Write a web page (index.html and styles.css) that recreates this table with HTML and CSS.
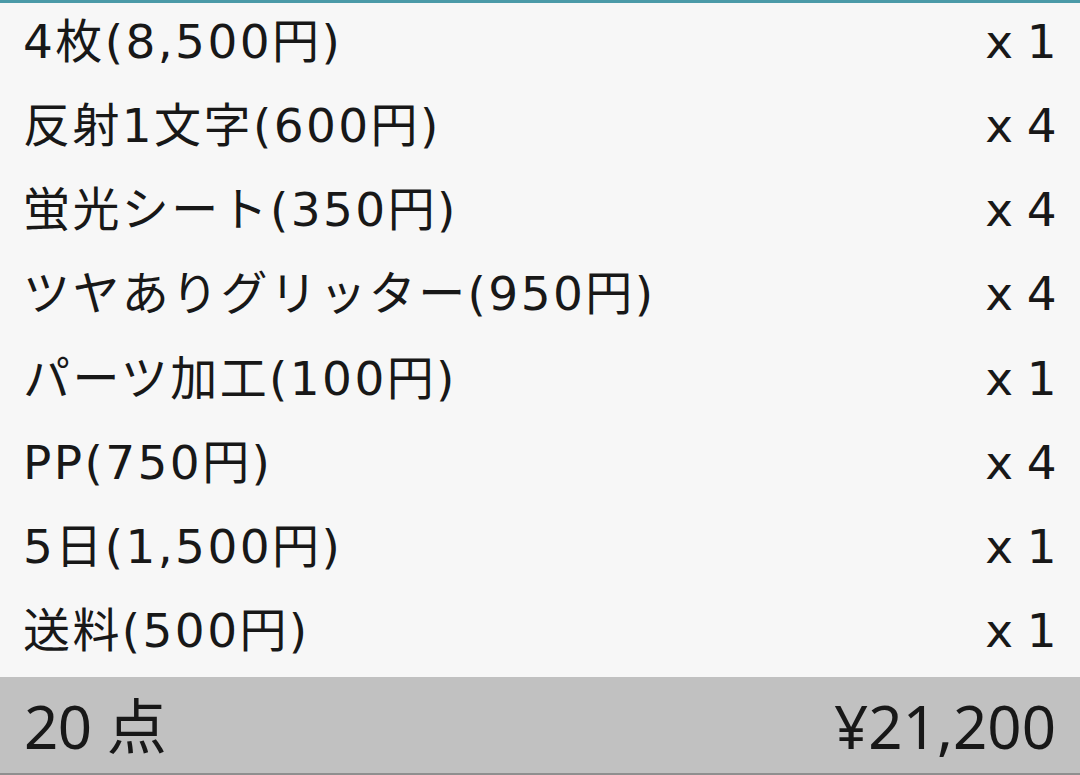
FILE: index.html
```html
<!DOCTYPE html>
<html lang="ja">
<head>
<meta charset="utf-8">
<link rel="stylesheet" href="styles.css">
</head>
<body>
<div class="screen">
  <div class="list">
    <div class="row"><span class="name">4枚(8,500円)</span><span class="qty">x 1</span></div>
    <div class="row"><span class="name">反射1文字(600円)</span><span class="qty">x 4</span></div>
    <div class="row"><span class="name">蛍光シート(350円)</span><span class="qty">x 4</span></div>
    <div class="row"><span class="name">ツヤありグリッター(950円)</span><span class="qty">x 4</span></div>
    <div class="row"><span class="name">パーツ加工(100円)</span><span class="qty">x 1</span></div>
    <div class="row"><span class="name">PP(750円)</span><span class="qty">x 4</span></div>
    <div class="row"><span class="name">5日(1,500円)</span><span class="qty">x 1</span></div>
    <div class="row"><span class="name">送料(500円)</span><span class="qty">x 1</span></div>
  </div>
  <div class="total"><span class="count">20 点</span><span class="sum">¥21,200</span></div>
</div>
</body>
</html>
```
FILE: styles.css
```css
html, body { margin: 0; padding: 0; }
body {
  width: 1080px; height: 775px; overflow: hidden;
  background: #f7f7f7;
  color: #181818;
}
.screen {
  display: flex; flex-direction: column; height: 775px;
  border-top: 3px solid #4b9aa8; box-sizing: border-box;
}
.list { display: flex; flex-direction: column; }
.row {
  height: 84.25px; display: flex; align-items: center; justify-content: space-between;
  padding: 0 21px 0 23px;
  font-family: "DejaVu Sans", "Noto Sans CJK JP", sans-serif;
  font-size: 47px; line-height: 1; letter-spacing: 2.4px;
}
.name, .qty { position: relative; top: -4px; }
.qty { word-spacing: -6px; }
.total {
  flex: 1; display: flex; align-items: center; justify-content: space-between;
  background: #c1c1c1; border-bottom: 2px solid #8f8f8f;
  padding: 0 24px 0 24px;
  font-family: "Noto Sans", "Noto Sans CJK JP", sans-serif;
  font-size: 60px; line-height: 1;
}
.count, .sum { position: relative; top: 1px; }
.count { letter-spacing: -0.5px; }
```
